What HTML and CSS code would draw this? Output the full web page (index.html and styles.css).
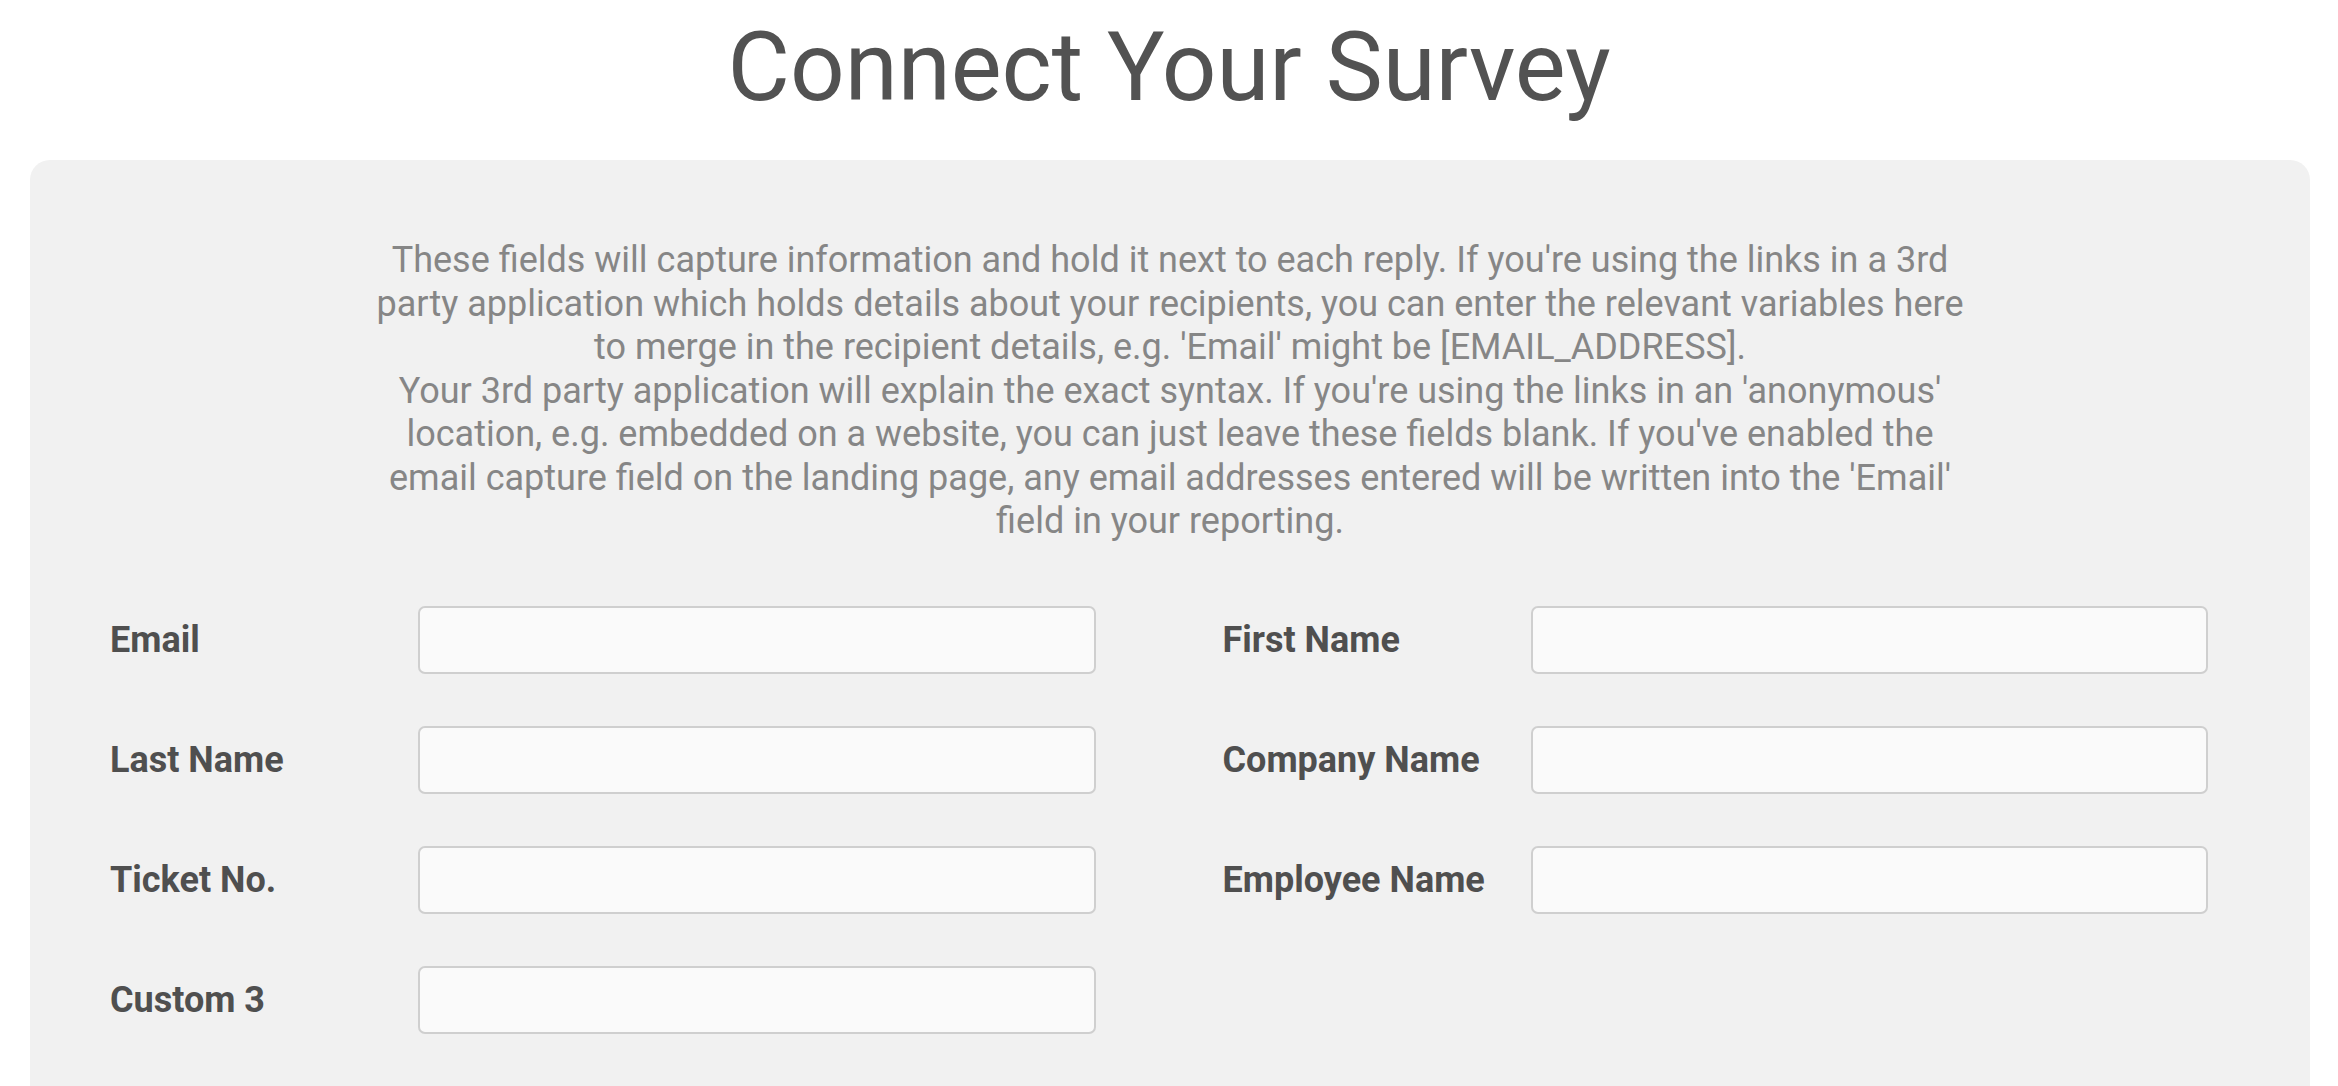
FILE: index.html
```html
<!DOCTYPE html>
<html lang="en">
<head>
    <meta charset="UTF-8">
    <meta name="viewport" content="width=device-width, initial-scale=1.0">
    <title>Connect Your Survey</title>
    <link rel="stylesheet" href="styles.css">
</head>
<body>
<h1 class="page-title">Connect Your Survey</h1>
<div class="panel">
    <p class="intro">
        These fields will capture information and hold it next to each reply. If you're using the links in a 3rd party application which holds details about your recipients, you can enter the relevant variables here to merge in the recipient details, e.g. 'Email' might be [EMAIL_ADDRESS].<br>
        Your 3rd party application will explain the exact syntax. If you're using the links in an 'anonymous' location, e.g. embedded on a website, you can just leave these fields blank. If you've enabled the email capture field on the landing page, any email addresses entered will be written into the 'Email' field in your reporting.
    </p>
    <form class="fields">
        <div class="field">
            <label for="email">Email</label>
            <input type="text" id="email">
        </div>
        <div class="field">
            <label for="firstName">First Name</label>
            <input type="text" id="firstName">
        </div>
        <div class="field">
            <label for="lastName">Last Name</label>
            <input type="text" id="lastName">
        </div>
        <div class="field">
            <label for="companyName">Company Name</label>
            <input type="text" id="companyName">
        </div>
        <div class="field">
            <label for="ticketNo">Ticket No.</label>
            <input type="text" id="ticketNo">
        </div>
        <div class="field">
            <label for="employeeName">Employee Name</label>
            <input type="text" id="employeeName">
        </div>
        <div class="field">
            <label for="custom3">Custom 3</label>
            <input type="text" id="custom3">
        </div>
    </form>
</div>
</body>
</html>
```

FILE: styles.css
```css
body {
    font-family: Roboto, "Noto Sans", sans-serif;
    margin: 0;
    padding: 0;
    background-color: #ffffff;
}
.page-title {
    font-size: 96px;
    font-weight: 400;
    line-height: 1.2;
    color: #525252;
    text-align: center;
    margin: 0 0 35px 0;
    padding-top: 10px;
}
.panel {
    background-color: #f1f1f1;
    border-radius: 20px;
    margin: 0 28px 0 30px;
    padding: 79px 80px 80px 80px;
}
.intro {
    max-width: 1600px;
    margin: 0 auto 62px auto;
    font-size: 36px;
    line-height: 43.5px;
    color: #868686;
    text-align: center;
}
.fields {
    display: grid;
    grid-template-columns: 1fr 1fr;
    column-gap: 127px;
    row-gap: 52px;
    padding-right: 22px;
}
.field {
    display: flex;
    align-items: center;
}
.field label {
    width: 308px;
    flex-shrink: 0;
    font-size: 36px;
    font-weight: 700;
    color: #4f4f4f;
}
.field input {
    flex: 1;
    height: 68px;
    box-sizing: border-box;
    border: 2px solid #cfcfcf;
    border-radius: 7px;
    background-color: #fafafa;
    font-family: inherit;
    font-size: 28px;
    padding: 0 14px;
}
```
